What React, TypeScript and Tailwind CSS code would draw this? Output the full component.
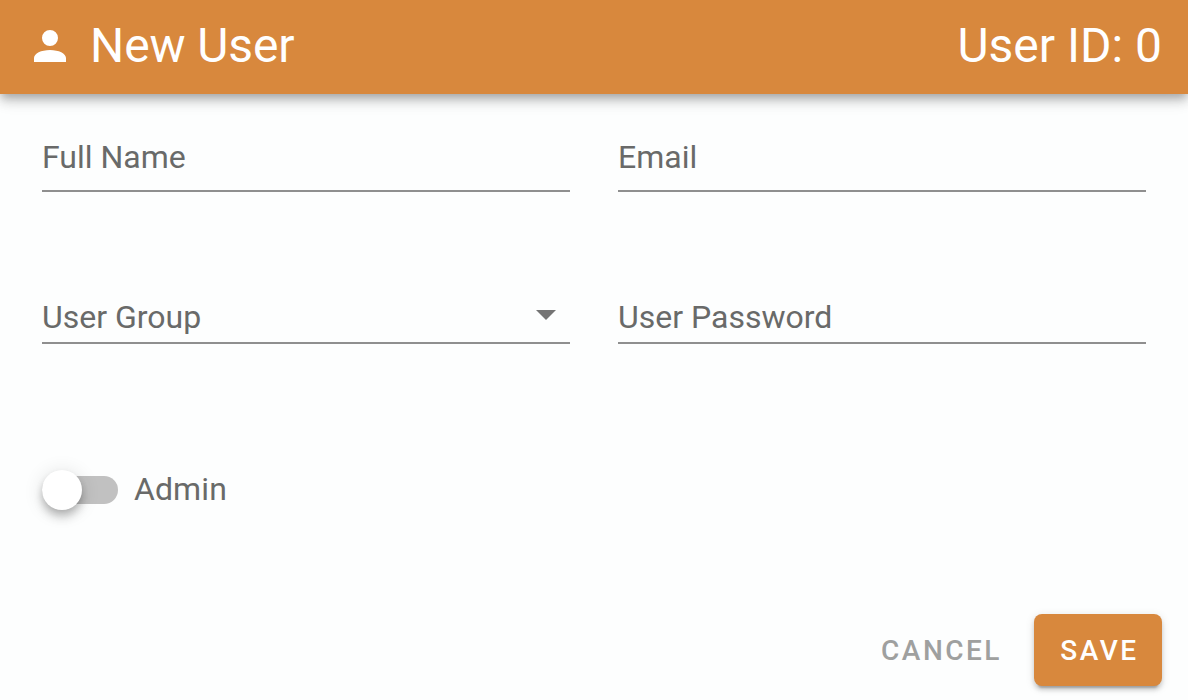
import React from "react";

function Field({ label, className, select }: { label: string; className: string; select?: boolean }) {
  return (
    <div className={`flex w-[528px] items-start justify-between border-b-2 border-[#8f8f8f] ${className}`}>
      <span className="text-[32px] leading-[40px]">{label}</span>
      {select && (
        <svg className="mr-[14px] mt-[13px] h-[10px] w-5" viewBox="0 0 20 10" fill="#747474">
          <path d="M0 0h20L10 10z" />
        </svg>
      )}
    </div>
  );
}

export default function App() {
  return (
    <div className="flex h-[700px] w-[1188px] flex-col overflow-hidden bg-[#fdfefe] font-['Roboto',sans-serif] text-[#696a69]">
      <header className="flex h-[94px] shrink-0 items-center justify-between bg-[#d8883d] pb-[2px] pl-[34px] pr-[26px] text-white shadow-[0_4px_8px_-2px_rgba(0,0,0,0.2),0_8px_10px_rgba(0,0,0,0.14),0_2px_20px_rgba(0,0,0,0.12)]">
        <div className="flex items-center">
          <svg className="h-8 w-8" viewBox="4 4 16 16" fill="currentColor">
            <path d="M12 4a4 4 0 1 1 0 8 4 4 0 0 1 0-8m0 10c4.42 0 8 1.79 8 4v2H4v-2c0-2.21 3.58-4 8-4Z" />
          </svg>
          <h1 className="ml-6 text-[48px] leading-[56px] tracking-[-0.1px]">New User</h1>
        </div>
        <span className="text-[48px] leading-[56px]">User ID: 0</span>
      </header>
      <main className="grid shrink-0 grid-cols-[528px_528px] gap-x-12 pl-[42px]">
        <Field label="Full Name" className="mt-[43px] h-[55px]" />
        <Field label="Email" className="mt-[43px] h-[55px]" />
        <Field label="User Group" select className="mt-[105px] h-[47px]" />
        <Field label="User Password" className="mt-[105px] h-[47px]" />
      </main>
      <label className="ml-[42px] mt-[126px] flex h-10 shrink-0 items-center">
        <span className="flex h-7 w-[76px] items-center rounded-full bg-[#c1c1c1]">
          <span className="h-10 w-10 rounded-full bg-white shadow-[0_4px_8px_-2px_rgba(0,0,0,0.2),0_8px_10px_rgba(0,0,0,0.14),0_2px_20px_rgba(0,0,0,0.12)]" />
        </span>
        <span className="mb-[2px] ml-4 text-[32px] leading-[40px] tracking-[0.1px]">Admin</span>
      </label>
      <footer className="mt-[104px] flex h-[72px] shrink-0 justify-end pr-[26px] text-[28px] font-medium tracking-[2.5px]">
        <button className="mr-8 pt-[2px] text-[#9fa09f]">CANCEL</button>
        <button className="w-32 rounded-lg bg-[#d8883d] pl-[3px] pt-[2px] text-white shadow-[0_6px_2px_-4px_rgba(0,0,0,0.2),0_4px_4px_rgba(0,0,0,0.14),0_2px_10px_rgba(0,0,0,0.12)]">SAVE</button>
      </footer>
    </div>
  );
}
